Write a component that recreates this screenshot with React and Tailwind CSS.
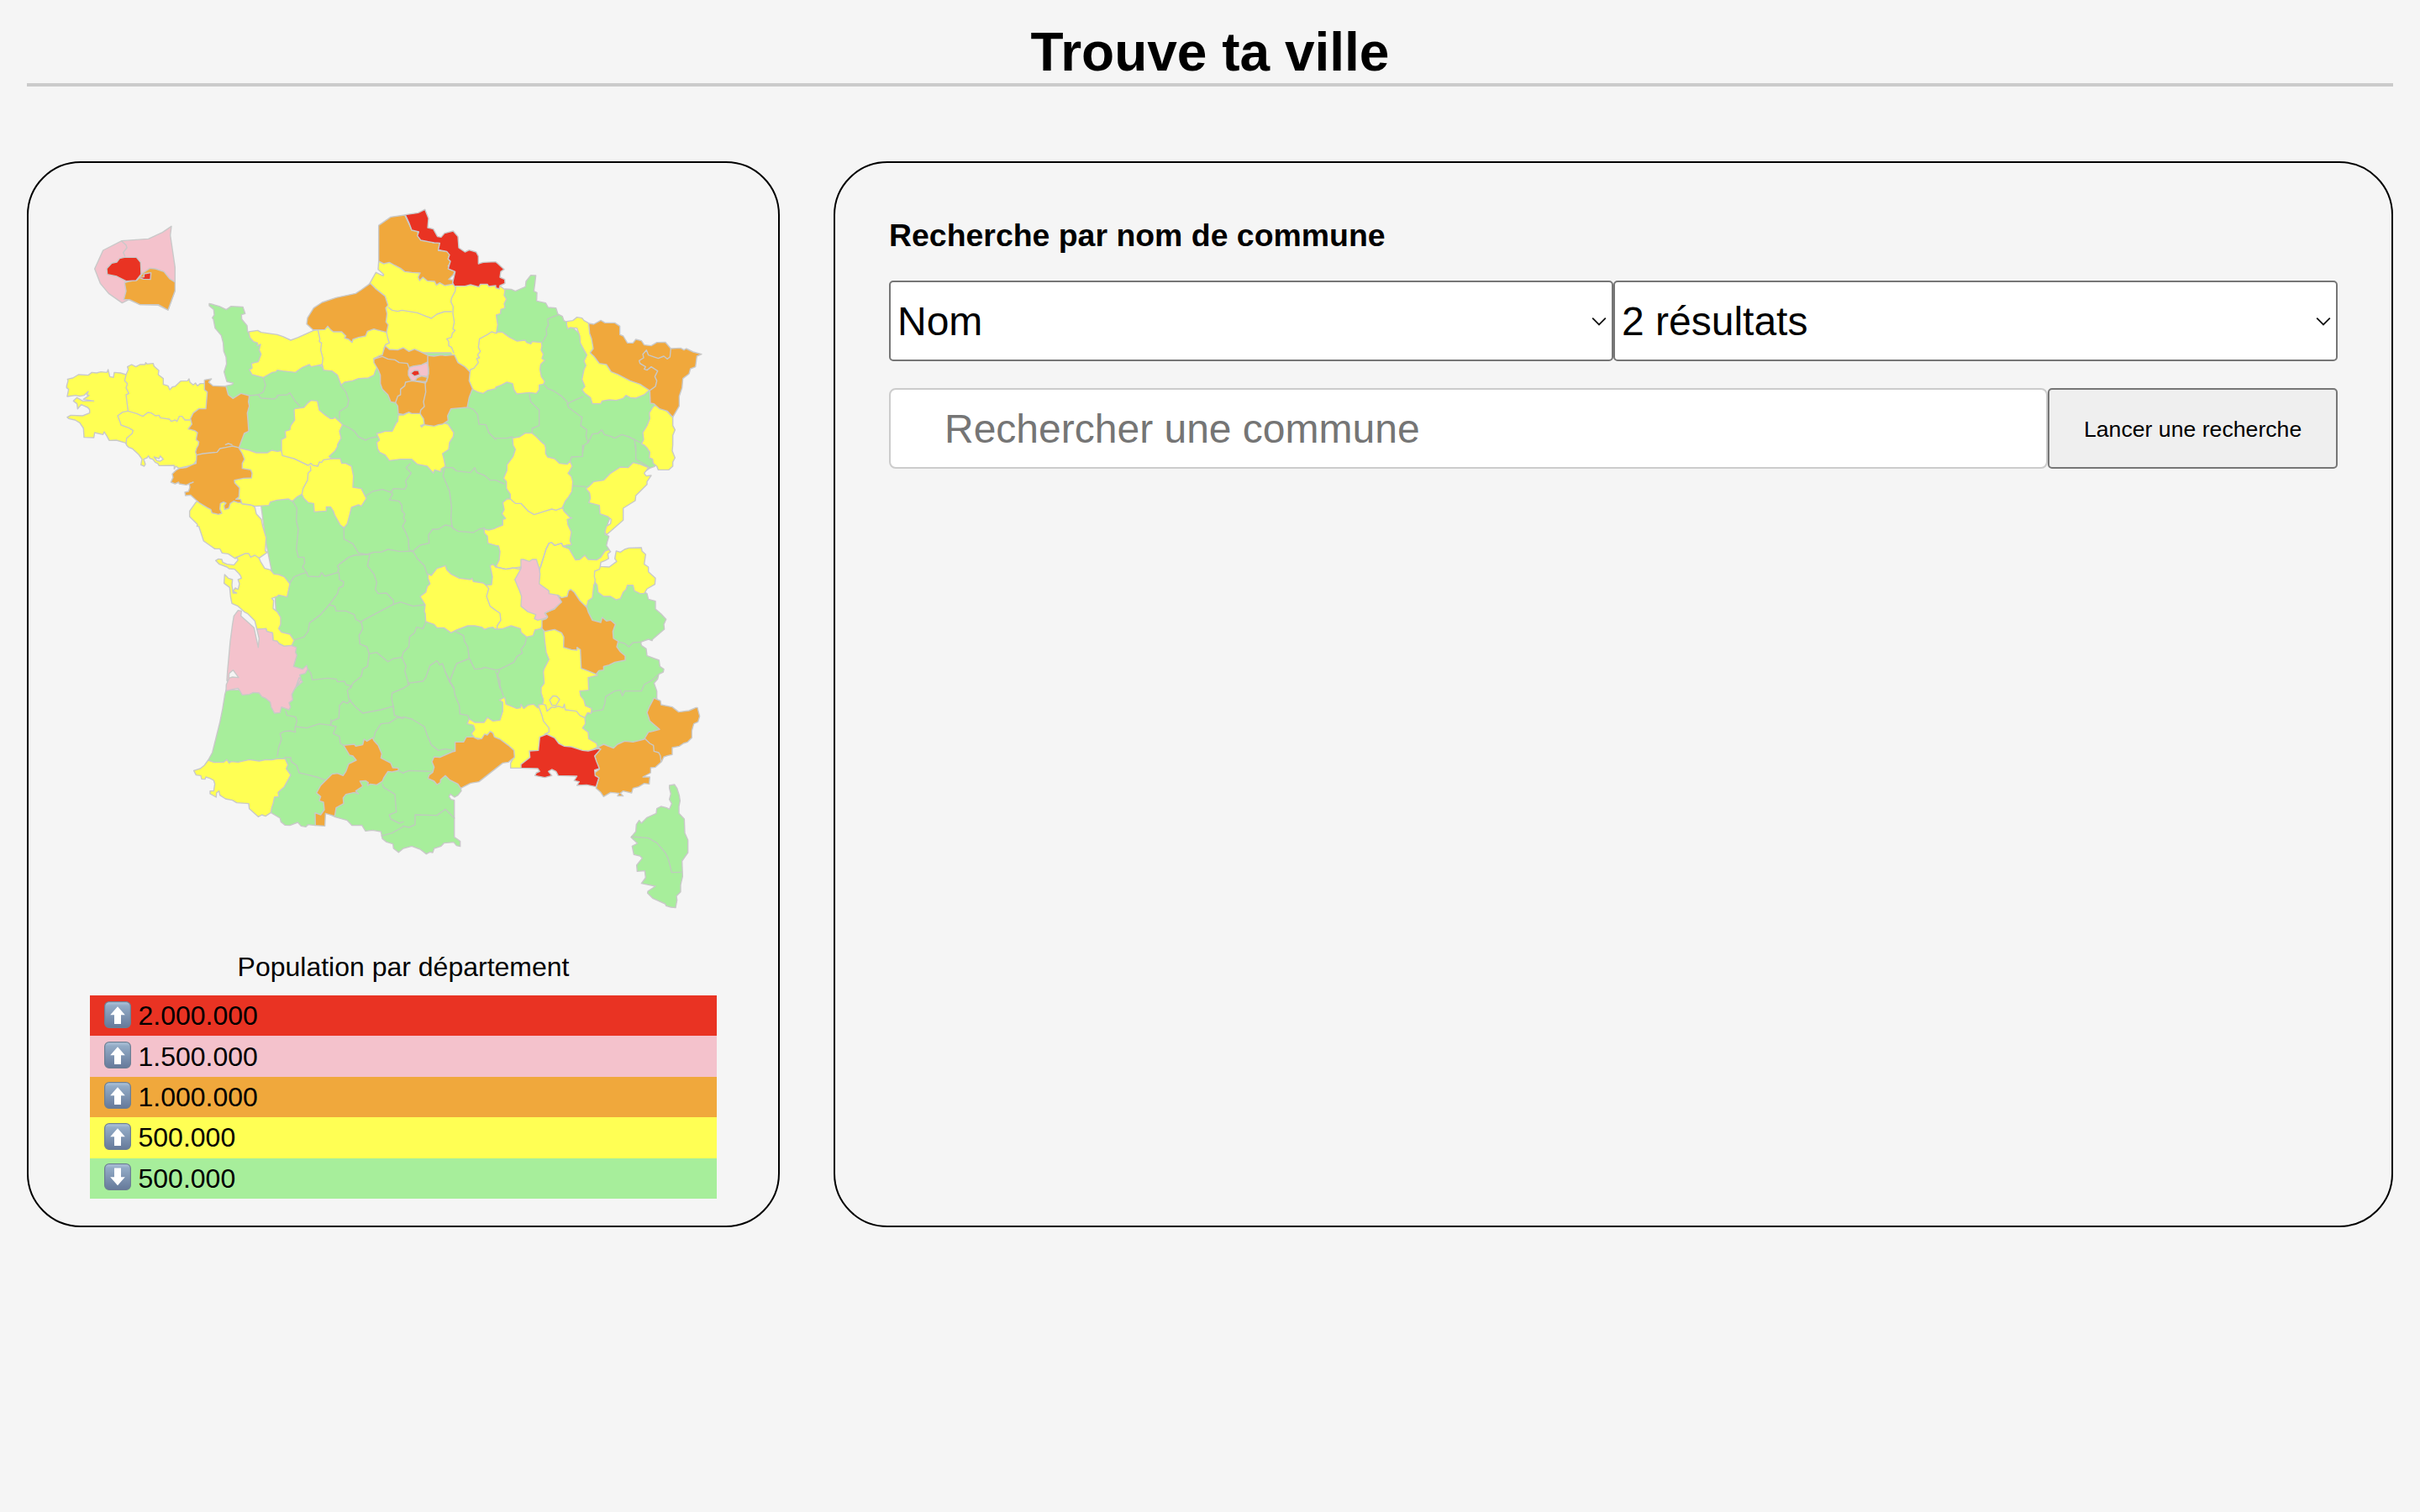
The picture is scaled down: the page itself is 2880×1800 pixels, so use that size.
import React from "react";

/* Origin of each map sheet, in map units. */
const SHEETS = {
  A: [0, 0],
  B: [780, 0],
  C: [1560, 0],
  D: [0, 870],
  E: [780, 870],
  F: [1560, 870],
  G: [450, 1680],
  H: [1230, 1680],
};

/* Turns "A 1,2 3,4 B 5,6" into path data; a letter selects the sheet of the points after it. */
function trace(text, closed) {
  let origin = SHEETS.A;
  let d = "";
  text.trim().split(/\s+/).forEach((token) => {
    if (SHEETS[token]) {
      origin = SHEETS[token];
      return;
    }
    const [x, y] = token.split(",").map(Number);
    d += (d ? "L" : "M") + (x + origin[0]) + " " + (y + origin[1]);
  });
  return closed ? d + "Z" : d;
}

const GREEN = [
  "A 537,364 545,366 573,374 598,386 615,374 657,376 665,400 652,404 653,420 672,443 674,465 760,520 B 60,560 200,600 450,450 700,400 C 20,330 33,312 55,313 70,320 106,304 108,285 125,263 143,264 140,290 136,320 147,325 146,355 178,362 187,378 215,380 222,402 238,410 243,425 253,430 330,500 450,580 560,680 600,800 F 590,50 567,76 550,82 450,150 400,280 390,318 404,325 398,345 395,358 405,373 360,430 390,450 450,480 540,530 545,550 570,557 570,585 590,602 608,622 600,640 602,657 560,693 558,698 545,693 518,703 520,715 537,727 540,752 583,768 586,790 600,800 598,810 582,818 578,835 565,850 H 905,68 905,92 920,180 870,300 720,330 600,330 430,280 250,330 205,415 207,425 195,440 183,447 168,436 163,445 170,455 182,458 182,590 193,597 203,605 203,623 190,620 180,608 145,611 135,622 110,630 105,645 95,643 82,650 60,633 30,622 0,630 G 763,644 745,630 743,614 720,607 705,595 700,570 670,565 645,568 632,547 597,548 580,530 537,518 500,500 465,548 440,545 432,553 415,550 403,537 375,548 358,547 343,535 340,522 307,502 250,400 120,350 83,315 98,288 110,240 125,180 135,130 143,80 147,65 300,60 D 780,690 770,500 740,350 720,200 560,80 A 620,780 597,658 620,653 622,648 600,643 590,608 599,580 597,555 589,535 587,505 580,478 558,452 552,420 548,415 555,405 553,385 537,372",
  "H 950,405 968,402 977,415 985,440 988,460 984,480 984,505 1003,525 1005,575 1016,600 1016,645 995,675 997,730 990,760 990,785 975,800 977,815 972,842 955,840 938,835 935,828 890,808 872,790 873,783 900,765 850,755 865,735 862,710 835,712 833,690 853,665 845,657 823,652 817,622 836,612 813,590 830,570 832,545 842,530 850,540 870,520 903,505 905,488 920,480 940,485 950,490 958,470 950,455 955,435 950,415",
];

const YELLOW = [
  "A 28,658 33,640 31,634 50,630 70,618 105,620 118,610 135,612 150,608 172,610 176,600 182,625 195,628 198,610 220,612 240,618 248,600 245,590 260,582 275,590 290,582 308,582 310,575 315,580 337,578 340,588 357,603 355,618 373,632 373,653 390,658 396,672 405,662 415,660 435,641 460,640 465,633 468,645 480,655 488,648 495,658 505,650 522,650 535,690 530,742 510,780 510,830 505,870 D 495,50 480,70 428,82 418,75 412,85 412,72 358,73 353,65 345,62 335,50 325,47 320,38 315,45 303,50 309,68 305,75 293,70 297,50 285,33 262,12 250,8 242,0 A 240,862 232,860 205,852 180,853 172,838 162,822 158,832 128,825 125,843 90,842 88,810 75,790 58,780 35,775 30,770 43,763 85,765 110,755 110,743 103,735 80,725 67,740 65,722 52,712 65,700 85,712 125,712 88,706 108,692 100,690 105,678 90,692 75,695 60,692 30,696 35,670 28,665",
  "A 678,465 710,460 722,467 780,475 B 0,475 20,482 48,495 75,485 130,460 145,458 250,420 330,292 352,253 378,265 380,260 360,242 362,213 450,220 600,270 640,295 780,290 C 33,315 30,335 38,348 30,365 33,380 18,385 17,400 2,405 3,415 7,440 2,470 10,465 25,467 40,478 50,485 75,498 105,495 110,503 125,508 130,500 163,503 165,515 162,530 170,545 165,560 175,567 160,582 158,600 163,625 175,642 170,652 155,655 155,672 145,685 120,682 90,685 75,687 65,672 60,650 40,645 20,655 0,663 B 780,668 750,675 735,685 715,680 700,672 690,660 650,600 620,540 400,540 345,560 358,590 350,605 345,620 325,630 290,632 268,640 240,645 228,655 222,640 215,620 195,605 165,602 160,582 120,590 115,582 90,592 78,600 65,610 20,605 0,602 A 775,608 762,610 748,618 730,628 690,618 680,600 690,595 688,578 712,572 722,545 715,530 720,510 708,515 710,505 695,500 682,485 678,467",
  "C 253,428 275,425 290,413 308,416 315,425 330,433 345,480 360,540 450,600 552,670 530,690 500,702 480,700 465,692 455,703 430,710 405,708 380,712 375,722 345,722 338,700 318,685 308,672 318,660 308,635 315,600 322,585 315,570 325,548 315,530 302,505 300,480 290,452 265,450 257,455 253,440",
  "C 567,728 590,735 610,748 632,770 632,800 640,815 632,835 632,868 F 630,20 640,45 632,60 632,75 618,88 580,88 575,75 562,65 560,50 548,45 550,25 540,10 530,0 C 520,865 528,850 525,825 540,800 550,775 548,755 560,735",
  "F 490,62 515,68 545,80 530,100 537,110 555,108 540,130 540,140 500,180 498,198 455,225 455,268 395,320 390,310 395,290 410,280 412,265 400,255 372,245 370,215 332,205 338,190 335,170 322,155 335,145 350,130 385,125 410,100 445,78 472,80",
  "C 60,845 85,840 105,827 130,827 145,840 165,860 175,868 F 178,10 178,30 185,42 210,48 228,65 255,68 265,57 273,75 262,95 258,100 270,112 275,130 272,165 260,185 248,200 238,222 243,235 265,258 272,260 255,265 258,285 270,310 265,340 270,355 250,358 190,440 90,450 35,442 0,435 12,410 15,380 10,360 0,358 E 752,350 750,325 740,315 738,300 755,303 775,298 F 0,295 25,285 25,265 35,262 22,245 30,230 25,205 40,192 52,192 52,175 38,155 38,130 28,118 40,90 40,70 62,40 70,15 62,0",
  "F 190,350 200,348 210,358 235,350 240,362 262,370 285,410 300,408 318,393 330,408 360,410 375,400 390,378 403,373 410,380 400,388 403,405 390,412 375,418 373,433 405,435 432,415 425,405 430,378 445,382 460,372 475,367 520,366 522,378 535,390 530,425 545,435 545,452 570,475 568,497 540,513 530,530 515,530 495,520 490,500 470,500 465,515 455,525 445,548 430,552 410,540 385,540 365,525 362,500 355,490 350,500 345,545 330,555 325,575 270,560 200,560 145,500 158,440 180,370",
  "E 538,460 550,465 570,440 580,437 600,430 605,445 620,460 650,475 690,480 695,475 700,487 735,492 745,500 765,498 768,470 760,430 770,425 780,435 F 35,443 90,435 120,560 180,625 160,655 140,660 133,680 110,685 90,668 88,655 55,645 25,655 5,657 E 775,655 770,650 755,652 740,658 730,650 705,645 680,645 640,660 620,670 595,652 570,652 560,640 530,630 528,600 525,595 528,570 510,540 530,525 535,505 545,495 538,475",
  "F 172,665 240,650 310,720 363,820 H 693,12 660,20 662,65 630,68 633,85 645,100 650,120 672,130 670,148 658,145 648,163 650,185 640,200 660,215 662,238 690,255 693,268 650,290 480,343 418,343 383,343 383,325 397,300 300,230 285,240 255,235 243,220 255,205 250,190 228,185 235,167 255,180 288,180 300,162 320,175 345,172 355,140 355,108 343,100 362,90 367,115 385,122 405,130 418,128 420,115 430,130 445,118 465,115 480,128 483,117 497,115 500,100 492,75 492,55 503,40 500,0 F 172,800 190,765 180,740 175,700",
  "B 432,762 450,762 470,752 480,757 515,757 560,780 610,795 630,825 628,840 615,860 E 612,15 590,30 595,50 600,75 585,85 585,95 562,88 557,100 535,75 500,68 480,50 440,50 400,55 385,35 365,25 358,12 B 355,860 365,852 355,828 370,825 385,820 410,820 425,790 430,785",
  "B 62,740 95,735 110,718 120,710 143,712 150,745 168,760 190,775 200,775 205,770 225,788 233,797 222,820 228,845 215,868 E 215,5 205,22 185,40 195,48 225,48 230,65 245,65 265,75 272,110 270,150 300,155 318,190 300,218 290,213 265,222 258,250 250,280 238,295 225,285 205,250 200,235 190,220 175,220 175,235 132,238 130,208 110,205 95,190 88,175 70,185 53,200 40,192 0,196 D 755,203 750,215 700,218 680,212 655,210 630,190 600,120 630,50 643,10 680,18 705,27 745,27 760,18 780,22 E 15,20 15,0 B 15,850 30,842 28,820 45,815 48,800 62,780 60,745",
  "D 490,203 467,235 467,255 495,283 493,290 500,290 517,342 557,370 575,370 583,385 605,388 630,405 633,400 640,410 625,428 600,425 585,418 582,408 570,406 560,412 573,425 600,435 608,441 628,443 640,455 648,465 652,475 640,480 645,495 640,515 630,510 622,522 635,528 622,528 618,500 620,480 605,475 592,462 590,493 610,508 613,540 618,565 640,575 662,595 675,602 700,628 707,657 740,655 742,665 763,670 765,697 780,700 E 5,708 25,718 52,715 60,697 45,675 15,668 5,655 12,640 12,615 0,595 D 765,583 767,555 760,547 780,540 E 5,535 35,542 45,495 25,470 5,462 D 768,460 755,445 735,440 720,415 715,403 745,382 737,378 740,330 728,290 723,265 705,245 700,222 690,215 655,210 630,190 560,180 500,200",
  "G 83,315 105,323 138,322 150,313 158,325 165,320 190,322 230,313 265,318 290,313 310,314 330,310 358,310 368,332 362,345 378,368 355,410 333,430 335,445 320,447 315,470 310,485 307,502 288,515 275,510 262,517 230,488 228,470 185,467 170,458 145,453 125,440 122,425 113,432 112,447 90,435 90,425 103,425 107,400 103,387 90,380 75,375 72,383 60,382 57,370 40,368 32,352 55,345 70,333",
];

const ORANGE = [
  "A 520,637 545,633 535,645 550,658 597,660 605,690 622,703 650,685 680,693 677,715 680,730 673,755 675,780 678,820 662,828 650,860 D 643,10 655,30 663,50 655,65 655,83 685,88 690,100 688,117 660,118 627,125 628,135 645,152 643,185 632,193 648,193 653,205 640,205 625,200 612,208 607,225 592,230 590,215 597,207 588,203 577,208 575,228 582,243 570,247 547,242 543,230 530,223 500,205 470,178 452,180 450,168 463,165 468,150 465,137 480,132 455,142 430,138 428,132 415,138 400,132 408,115 405,103 418,90 430,83 455,80 475,70 490,65 492,35 488,25 492,10 498,0 A 500,858 490,850 495,825 485,818 462,812 475,795 470,775 480,755 500,740 525,740 530,680 520,672",
  "B 332,292 350,310 385,338 395,370 387,380 392,400 388,430 396,440 390,467 355,458 345,455 322,463 315,480 290,485 270,492 267,503 255,492 240,487 245,480 230,465 200,465 190,457 180,445 170,457 150,458 128,458 105,437 108,415 130,380 160,360 210,343 280,328 300,315",
  "B 455,48 475,90 480,102 500,103 505,125 530,140 560,147 578,138 580,150 575,175 610,178 615,190 610,205 620,215 610,230 620,243 635,245 628,262 612,278 628,280 625,295 598,300 580,290 568,298 562,285 535,283 520,270 508,282 503,270 510,255 480,253 455,250 440,238 420,228 400,217 380,222 362,213 362,85 405,55",
  "B 385,515 400,528 430,530 450,522 470,535 490,527 520,540 540,550 560,552 585,548 600,550 632,547 645,575 670,590 688,608 685,640 697,668 685,700 678,735 620,740 608,765 610,782 590,795 575,797 560,802 525,797 515,805 512,800 525,795 522,775 510,757 480,757 470,752 450,760 432,757 430,730 422,718 405,715 395,690 375,670 368,650 368,620 360,600 345,575 345,562 365,550 375,548 380,530",
  "C 332,435 350,438 375,424 390,433 425,433 443,445 443,475 455,480 470,505 490,505 500,492 520,497 530,512 555,515 575,503 605,502 625,525 660,523 672,530 680,525 705,537 735,545 718,552 713,590 695,597 690,615 668,632 665,665 655,695 655,730 632,770 612,748 585,740 565,722 552,720 550,675 515,652 480,640 435,617 412,608 395,582 370,578 350,552 337,540 348,525 342,490 335,470",
  "F 222,535 235,545 255,540 260,520 268,515 280,525 300,555 325,580 330,595 345,625 375,633 380,615 395,628 410,625 427,640 418,665 420,690 437,700 432,720 445,738 462,752 462,768 425,775 405,785 385,790 385,803 368,805 358,818 335,808 305,797 302,730 290,722 290,732 270,730 242,722 243,685 235,670 210,658 175,665 165,655 165,625 180,620 185,612 175,598 210,585 232,560",
  "H 895,93 918,103 920,117 960,125 983,143 1020,138 1045,127 1050,127 1058,158 1052,178 1037,185 1030,210 1030,235 1015,250 1000,255 985,265 960,270 960,295 945,298 930,303 922,320 900,340 883,342 883,360 855,375 880,375 878,400 860,398 840,410 820,415 815,432 785,425 775,433 785,443 765,443 770,433 740,430 715,445 705,430 688,415 698,378 685,370 683,360 700,347 690,343 688,315 683,300 703,275 695,268 715,258 750,272 765,258 790,247 820,250 860,240 875,215 890,212 915,205 880,175 870,145 878,125",
  "H 310,212 320,218 325,232 345,240 375,262 395,280 397,305 375,322 355,325 270,392 240,397 205,415 195,400 165,385 150,370 133,385 132,395 120,402 110,390 88,380 92,368 105,358 110,340 102,320 110,303 130,305 175,285 185,283 185,250 215,250 225,232 250,232 265,240 280,238 290,222 300,225",
  "G 567,262 605,258 610,265 635,260 640,240 650,247 670,235 675,245 690,262 703,292 700,307 735,325 742,342 762,343 762,352 740,357 725,355 710,378 705,390 685,403 663,400 652,405 655,395 645,388 625,390 635,408 610,425 620,435 605,430 575,437 565,450 567,470 540,485 535,515 502,505 500,550 466,548 465,503 485,510 498,492 495,465 480,460 485,445 470,432 485,405 525,365 545,362 565,370 575,355 585,328 612,315 600,300 588,297",
];

const PINK = [
  "F 90,408 100,408 120,415 130,408 145,408 155,440 158,460 155,495 190,520 190,530 220,535 235,560 210,583 175,600 185,615 170,620 150,625 138,620 143,605 115,595 90,575 92,540 85,520 68,480 85,450 90,440",
  "D 640,590 652,592 650,610 697,652 712,722 715,690 707,657 740,655 742,665 763,670 765,697 780,700 E 5,708 25,718 50,715 68,722 65,740 70,750 58,790 90,800 105,787 108,800 100,815 80,820 85,835 65,868 G 408,20 420,35 395,55 382,80 385,100 372,110 377,125 372,135 345,125 340,145 320,147 308,125 305,108 290,95 275,88 265,75 245,73 230,80 205,82 195,65 190,58 170,62 147,68 148,45 157,25 151,32 150,30 D 602,810 612,700 620,640 625,610",
  "B 472,592 485,588 515,583 537,573 540,615 535,625 515,622 500,630 490,640 480,640 468,620 468,605",
  "A 128,240 158,174 225,140 320,133 370,110 402,88 398,120 415,235 415,318 390,387 355,370 290,368 250,350 226,362 178,328 148,292",
];

/* Drawn after the pink ring it belongs to. */
const INSET_ORANGE = [
  "A 300,255 325,238 345,240 375,250 395,275 415,288 415,318 390,387 355,368 290,368 252,350 232,350 240,320 235,290 250,285 280,280",
  "B 492,640 499,629 515,623 537,628 533,643 515,642",
];

const RED = [
  "B 457,47 503,40 527,28 540,60 537,93 557,98 572,125 585,127 597,113 628,105 645,125 648,165 670,180 685,173 710,180 718,195 718,222 735,217 780,215 C 8,222 30,242 18,250 15,270 32,278 33,292 15,300 12,312 0,308 B 780,300 755,303 750,295 725,295 720,305 690,297 670,302 632,302 626,290 635,250 610,240 618,213 610,205 615,190 605,178 575,172 580,148 560,147 512,138 500,122 505,108 480,102 470,75",
  "H 512,222 540,235 555,255 575,265 600,267 640,280 660,282 690,275 705,275 683,300 690,320 700,345 683,350 685,370 698,378 688,410 655,403 620,405 628,392 610,388 620,372 553,370 545,355 530,348 518,355 530,370 505,377 470,370 475,360 487,355 480,345 420,343 420,330 452,305 450,282 482,280 487,232",
  "A 234,199 277,199 292,217 294,259 276,282 240,284 207,267 173,260 171,239 189,220 207,216 217,203",
  "A 286,271 304,269 304,258 329,254 327,278 302,277",
  "B 476,613 489,603 504,603 509,618 490,624",
];

const WATER = [
  "D 340,42 358,48 362,38 373,50 362,57 350,55",
  "D 622,803 642,830 620,828 607,832 608,815",
];

/* Borders between departments of the same class. */
const BORDERS = [
  "A 240,618 235,640 245,650 240,665 250,685 240,690 247,745",
  "A 247,748 228,752 210,765 218,785 222,798 250,808 265,817 262,828 242,845 240,865",
  "A 247,748 278,757 300,767 318,753 330,755 345,765 358,763 362,772 395,777 402,785 415,780 422,785 430,767 440,767 450,780 468,780",
  "B 145,458 152,490 150,500 158,505 155,530 163,560 160,582 165,602",
  "B 397,378 410,388 430,392 445,388 500,397 550,417 570,402 597,393 622,393",
  "B 637,303 635,320 622,345 620,358 628,375 627,400 632,430 627,455 635,460 625,470 622,485 605,490 612,500 612,515 622,520 630,540",
  "B 688,608 690,600 702,595 718,575 712,560 722,558 715,548 725,535 718,520 722,490 750,475 765,465 780,470",
  "B 390,467 395,490 400,505 387,510 380,525",
  "F 52,192 70,208 90,208 115,235 137,248 200,228 215,232 242,222",
  "F 270,355 240,360 235,350 210,358 200,348 190,350 180,370 160,435",
  "F 373,435 370,443 353,450 352,470 355,480 352,500",
  "E 745,500 755,512 747,540 760,575 780,590 F 15,600 18,625 5,645 5,655",
  "F 0,435 10,437 35,443 60,438 85,443 90,435",
  "H 483,122 495,155 500,175 520,200 520,215 505,222",
  "H 497,115 508,118 513,140 530,125 540,127 553,122 570,128 575,115 578,135 618,140 630,155 645,162",
  "H 530,118 522,100 535,85 548,87 558,98 545,120 530,118",
  "E 15,20 18,37 60,48 110,72 120,65 128,72 145,75 150,60 158,62 165,52 195,48",
  "E 118,75 120,90 110,100 108,125 92,155 88,175",
  "D 632,402 665,387 678,387 685,400 700,393 715,403",
  "D 492,35 515,30 565,25 575,12 600,7 620,3 640,8",
  "A 595,868 605,864 618,868",
  "B 345,562 375,553 395,562 420,565 435,575 465,578 470,592",
  "B 537,552 537,575 540,600 538,625 528,650 530,680 522,715 525,732 512,745 510,757",
  "B 422,718 430,695 440,690 440,670 455,658 458,645 480,640 500,643 530,648",
  "C 625,525 622,555 612,562 600,552 580,560 545,548 538,530 525,545 528,558 512,568 515,578 535,590 530,598 540,602 555,590 578,605 568,625 575,640 570,660 552,673",
  "H 862,238 880,255 893,262 895,283 912,288 918,300 920,320",
  "A 225,142 240,155 243,165 230,182 236,195",
];

/* Borders inside the green area, drawn a little softer. */
const SOFT_BORDERS = [
  "H 815,588 875,593 905,610 935,645 945,665 952,690 958,716 993,715",
  "A 730,628 738,655 730,680 712,690 680,693",
  "A 712,690 722,702 770,705 780,698 B 0,692 35,690 45,683 62,710 80,730",
  "B 225,655 245,680 255,710 250,732 222,750 222,775",
  "B 233,797 260,810 275,820 290,840 315,852 330,845 355,840",
  "B 680,735 700,742 715,760 720,795 745,797 755,825 780,850",
  "C 0,845 40,845 60,840",
  "E 318,180 340,165 375,158 405,168 415,155 455,157 462,145 458,128 478,100 460,80 475,65",
  "E 405,165 412,175 400,195 435,200 445,215 445,235 455,245 450,260 458,270 447,290 458,310 468,335 470,372 480,378",
  "E 597,85 592,110 605,140 615,165 622,220 620,260 625,295",
  "E 600,80 625,80 640,92 690,98 705,80 712,97 740,108 760,125 780,125 F 30,138",
  "E 625,290 600,285 575,300 555,300 540,320 542,350 510,357 482,380",
  "E 625,295 645,307 700,312 720,300 740,295",
  "E 238,295 238,335 270,352 290,385 320,390",
  "E 55,200 70,225 68,270 75,300 68,370 75,400 95,400 98,420 90,435 105,455",
  "E 105,455 85,460 60,470 45,492",
  "E 105,455 110,468 150,470 158,455 170,468 215,455 220,440 215,432 222,425 255,400 275,393 325,390",
  "E 220,455 222,480 237,488 235,503 220,510 215,530 185,570 155,605 115,635 110,665 95,685 62,695",
  "E 330,390 322,430 345,460 355,490 350,515 360,530 390,528 415,555 415,568",
  "E 320,390 345,382 370,382 395,372 440,380 485,378",
  "E 485,380 500,405 525,430 535,460",
  "E 415,568 345,605 295,632",
  "E 415,568 440,560 485,575 525,570",
  "E 185,570 205,575 210,592 245,592 275,605 280,622 300,632",
  "E 300,632 305,655 292,680 295,710 320,720 328,745",
  "E 328,745 355,740 395,773 415,762 445,758",
  "E 445,758 450,740 470,720 472,685 490,670 497,650 520,655 530,632",
  "E 328,745 322,790 305,800 300,825 270,850 262,868",
  "E 110,800 120,815 125,838 180,832 210,835 215,845 240,843 245,855 265,860",
  "E 445,758 460,790 455,805 465,840 470,855",
  "E 465,850 520,843 530,830 545,787 570,770 580,785 590,780 600,810 615,845",
  "E 635,665 665,680 668,700 680,720 685,760",
  "E 685,762 640,780 630,805 615,845 630,868",
  "E 685,760 705,800 730,798 740,793 780,803 F 15,800",
  "F 110,685 105,710 90,730 95,742 75,755 65,775 15,800 5,825 15,868",
  "H 150,0 165,30 180,55 185,85 200,120 202,150 230,155 235,165",
  "H 330,0 345,30 345,50 357,85",
  "H 0,160 30,168 50,180 75,195 85,225 100,260 125,280 150,275 180,280",
  "H 0,360 20,352 100,355",
  "H 0,550 20,555 42,545 42,510 120,512 150,490 182,522",
  "G 360,140 365,155 395,160 400,175 393,200 395,215 375,210 355,212 340,220 345,240 335,270 330,300",
  "G 395,195 435,200 480,185 520,190 522,170",
  "G 520,190 525,175 550,165 552,120 565,105 580,112 592,100",
  "G 595,50 580,65 585,95 592,105",
  "G 592,105 610,125 635,147 700,135 745,122 745,140",
  "G 800,45 780,58 740,75 738,95 745,125 748,155 780,165",
  "G 778,165 760,162 730,182 700,185 680,215 675,235",
  "G 520,190 540,195 530,220 552,230 555,255 567,262",
  "G 705,400 710,412 750,437 755,500 730,510 735,525 765,540 780,535",
  "G 703,585 740,575 780,552",
  "G 355,305 378,305 380,320 400,335 408,360 430,365 470,375 500,385",
  "G 762,352 780,362",
  "C 222,405 200,413 185,420 188,440 180,455 182,475 168,500",
  "C 175,655 185,668 205,675 235,695 255,715",
  "C 255,722 280,710 310,697",
  "C 255,720 260,735 300,765 308,770 303,800 325,815 322,838 330,860",
  "C 120,690 125,715 140,730 155,745 155,800 130,810 130,825",
  "C 310,900 315,870 330,860 345,830 365,828 378,815 388,832 410,838 425,845 450,832 475,840 495,850 500,890",
  "C 495,850 515,860",
  "F 310,0 310,40 270,42 265,60",
  "F 500,0 500,50 550,80",
  "F 275,145 320,148",
  "F 430,700 460,708 475,720 490,705 518,703",
  "H 660,150 680,140 712,135 720,110 722,88 755,68 775,65 782,85 790,68 850,68 860,45 890,28 910,10",
];

const LAYERS = [
  ["#a7ee9b", GREEN],
  ["#ffff54", YELLOW],
  ["#f0a83c", ORANGE],
  ["#f4c2cc", PINK],
  ["#f0a83c", INSET_ORANGE],
  ["#e93323", RED],
  ["#f5f5f5", WATER],
];

function FranceMap() {
  return (
    <svg
      viewBox="0 0 2340 2580"
      className="mt-[46px] ml-[36px] block h-[860px] w-[780px] shrink-0"
      stroke="#c9c9c9"
      strokeWidth="4.2"
      strokeLinejoin="round"
      strokeLinecap="round"
    >
      <g fill={LAYERS[0][0]}>
        {LAYERS[0][1].map((shape, j) => (
          <path key={j} d={trace(shape, true)} />
        ))}
      </g>
      <g fill="none" stroke="#bfcbbd">
        {SOFT_BORDERS.map((line, i) => (
          <path key={i} d={trace(line, false)} />
        ))}
      </g>
      {LAYERS.slice(1).map(([color, shapes], i) => (
        <g key={i} fill={color}>
          {shapes.map((shape, j) => (
            <path key={j} d={trace(shape, true)} />
          ))}
        </g>
      ))}
      <g fill="none">
        {BORDERS.map((line, i) => (
          <path key={i} d={trace(line, false)} />
        ))}
      </g>
    </svg>
  );
}

function ArrowBadge({ down }) {
  return (
    <svg viewBox="0 0 32 32" className="mb-[3px] h-8 w-8">
      <defs>
        <linearGradient id="badge" x1="0" y1="0" x2="0" y2="1">
          <stop offset="0" stopColor="#b4c8de" />
          <stop offset="0.15" stopColor="#93abc6" />
          <stop offset="1" stopColor="#65799a" />
        </linearGradient>
      </defs>
      <rect x="0.6" y="0.6" width="30.8" height="30.8" rx="5.4" fill="url(#badge)" stroke="#6d7f93" strokeWidth="1.2" />
      <path d="M16 6.3 24.8 16.3H20V27H12V16.3H7.2Z" fill="#fff" transform={down ? "rotate(180 16 16.3)" : undefined} />
    </svg>
  );
}

const LEGEND = [
  { color: "bg-[#e93323]", label: "2.000.000" },
  { color: "bg-[#f4c2cc]", label: "1.500.000" },
  { color: "bg-[#f0a83c]", label: "1.000.000" },
  { color: "bg-[#ffff54]", label: "500.000" },
  { color: "bg-[#a7ee9b]", label: "500.000", down: true },
];

function Select({ value }) {
  return (
    <div className="relative h-24 flex-1">
      <select className="h-full w-full appearance-none rounded-[5px] border-2 border-[#767676] bg-white pt-px pl-2 text-[48px] text-black">
        <option>{value}</option>
      </select>
      <svg viewBox="0 0 18 12" className="pointer-events-none absolute top-[43px] right-2 h-3 w-[18px]" fill="none" stroke="#111" strokeWidth="1.8">
        <path d="M1.2 1.6 9 9.4 16.8 1.6" />
      </svg>
    </div>
  );
}

export default function App() {
  return (
    <div className="min-h-[1800px] w-full bg-[#f5f5f5] px-8 font-['Liberation_Sans',Arial,sans-serif] text-black">
      <header className="h-[103px] border-b-4 border-[#cbcbcb] pt-[26px]">
        <h1 className="text-center text-[64px] leading-[72px] font-bold">Trouve ta ville</h1>
      </header>
      <main className="mt-[89px] flex h-[1269px] gap-16">
        <section className="flex w-[896px] flex-col rounded-[64px] border-2 border-black">
          <FranceMap />
          <p className="mt-[33px] text-center text-[32px] leading-[37px]">Population par département</p>
          <ul className="mx-auto mt-[15px] w-[746px]">
            {LEGEND.map((row, i) => (
              <li key={i} className={`flex h-[48.4px] items-center gap-[8.5px] pl-[17px] text-[32px] leading-[37px] ${row.color}`}>
                <ArrowBadge down={row.down} />
                <span className="pt-px">{row.label}</span>
              </li>
            ))}
          </ul>
        </section>
        <section className="flex-1 rounded-[64px] border-2 border-black p-16">
          <h3 className="text-[37.44px] leading-[44px] font-bold">Recherche par nom de commune</h3>
          <div className="mt-8 flex">
            <Select value="Nom" />
            <Select value="2 résultats" />
          </div>
          <div className="mt-8 flex h-24">
            <input
              placeholder="Rechercher une commune"
              className="w-4/5 rounded-lg border-2 border-[#ccc] bg-white px-16 pt-px text-[48px] placeholder:text-[#757575]"
            />
            <button className="w-1/5 rounded-[5px] border-2 border-[#767676] bg-[#efefef] pt-px text-[26.67px]">Lancer une recherche</button>
          </div>
        </section>
      </main>
    </div>
  );
}
